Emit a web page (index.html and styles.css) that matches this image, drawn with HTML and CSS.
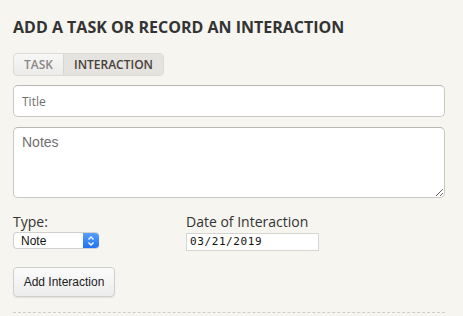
FILE: index.html
```html
<!DOCTYPE html>
<html>
<head>
    <title>Add a Task or Record an Interaction</title>
    <link rel="stylesheet" href="styles.css">
</head>
<body>
    <div class="panel">
        <h2>Add a Task or Record an Interaction</h2>
        <div class="tabs">
            <span class="tab">Task</span>
            <span class="tab active">Interaction</span>
        </div>
        <form id="interactionForm">
            <input type="text" class="title-input" placeholder="Title">
            <textarea class="notes" placeholder="Notes"></textarea>
            <div class="row">
                <div class="field type-field">
                    <label>Type:</label>
                    <div class="select">
                        <span>Note</span>
                        <span class="select-arrows">
                            <svg width="8" height="12" viewBox="0 0 8 12">
                                <path d="M1.5 4.5 L4 2 L6.5 4.5 M1.5 7.5 L4 10 L6.5 7.5" fill="none" stroke="#fff" stroke-width="1.3"/>
                            </svg>
                        </span>
                    </div>
                </div>
                <div class="field">
                    <label>Date of Interaction</label>
                    <div class="date-input">03/21/2019</div>
                </div>
            </div>
            <button type="button">Add Interaction</button>
        </form>
        <div class="divider"></div>
    </div>
</body>
</html>
```

FILE: styles.css
```css
body {
    margin: 0;
    background: #f6f5ef;
    font-family: 'Open Sans', sans-serif;
    color: #333;
}
.panel {
    padding: 16px 18px 0 13px;
}
h2 {
    margin: 0 0 13px;
    font-size: 16px;
    font-weight: 700;
    text-transform: uppercase;
    color: #333;
    line-height: 23px;
}
.tabs {
    display: inline-flex;
    height: 21px;
    border: 1px solid #dcdbd6;
    border-radius: 4px;
    overflow: hidden;
    background: linear-gradient(#f7f7f6, #ebebea);
}
.tab {
    display: flex;
    align-items: center;
    padding: 0 10px;
    font-size: 12px;
    font-weight: 600;
    text-transform: uppercase;
    color: #8a8785;
}
.tab.active {
    padding: 0 10px;
    background: #e4e3df;
    color: #4a3e38;
    border-left: 1px solid #d6d5d0;
}
form {
    margin-top: 9px;
}
.title-input, .notes {
    display: block;
    box-sizing: border-box;
    width: 100%;
    background: #fff;
    border: 1px solid #c9c8c4;
    border-top-color: #b8b7b3;
    border-radius: 5px;
    padding: 0 8px;
    color: #333;
}
.title-input {
    height: 32px;
    font-family: 'Open Sans', sans-serif;
    font-size: 12px;
}
.notes {
    margin-top: 10px;
    height: 71px;
    padding-top: 6px;
    font-family: 'Liberation Sans', sans-serif;
    font-size: 14px;
    resize: vertical;
}
::placeholder {
    color: #6f6f6f;
}
.row {
    display: flex;
    margin-top: 14px;
}
.field {
    display: flex;
    flex-direction: column;
}
.type-field {
    width: 173px;
}
label {
    font-size: 14px;
    line-height: 19px;
    color: #333;
}
.select {
    display: flex;
    align-items: center;
    justify-content: space-between;
    width: 86px;
    height: 17px;
    margin-top: 1px;
    box-sizing: border-box;
    background: #fff;
    border: 1px solid #d0d0d0;
    border-right: none;
    border-radius: 4px;
    font-family: 'Liberation Sans', sans-serif;
    font-size: 12px;
    color: #111;
    padding-left: 7px;
    overflow: hidden;
}
.select-arrows {
    display: flex;
    align-items: center;
    justify-content: center;
    width: 16px;
    height: 17px;
    border-radius: 0 4px 4px 0;
    background: linear-gradient(#5aa2fa, #1f6ff0);
}
.date-input {
    box-sizing: border-box;
    width: 133px;
    height: 18px;
    margin-top: 2px;
    background: #fff;
    border: 1px solid #d5d5d2;
    font-family: 'DejaVu Sans Mono', monospace;
    font-size: 11px;
    line-height: 16px;
    padding-left: 3px;
    letter-spacing: 0.6px;
    color: #111;
}
button {
    display: block;
    margin-top: 16px;
    width: 102px;
    height: 30px;
    background: linear-gradient(#fbfbfb, #ececec);
    border: 1px solid #cfcfcc;
    border-radius: 4px;
    font-family: 'Liberation Sans', sans-serif;
    font-size: 12px;
    color: #222;
    box-shadow: 0 1px 1px rgba(0,0,0,0.08);
}
.divider {
    margin-top: 15px;
    border-top: 1px dashed #cfcfcb;
}
```
